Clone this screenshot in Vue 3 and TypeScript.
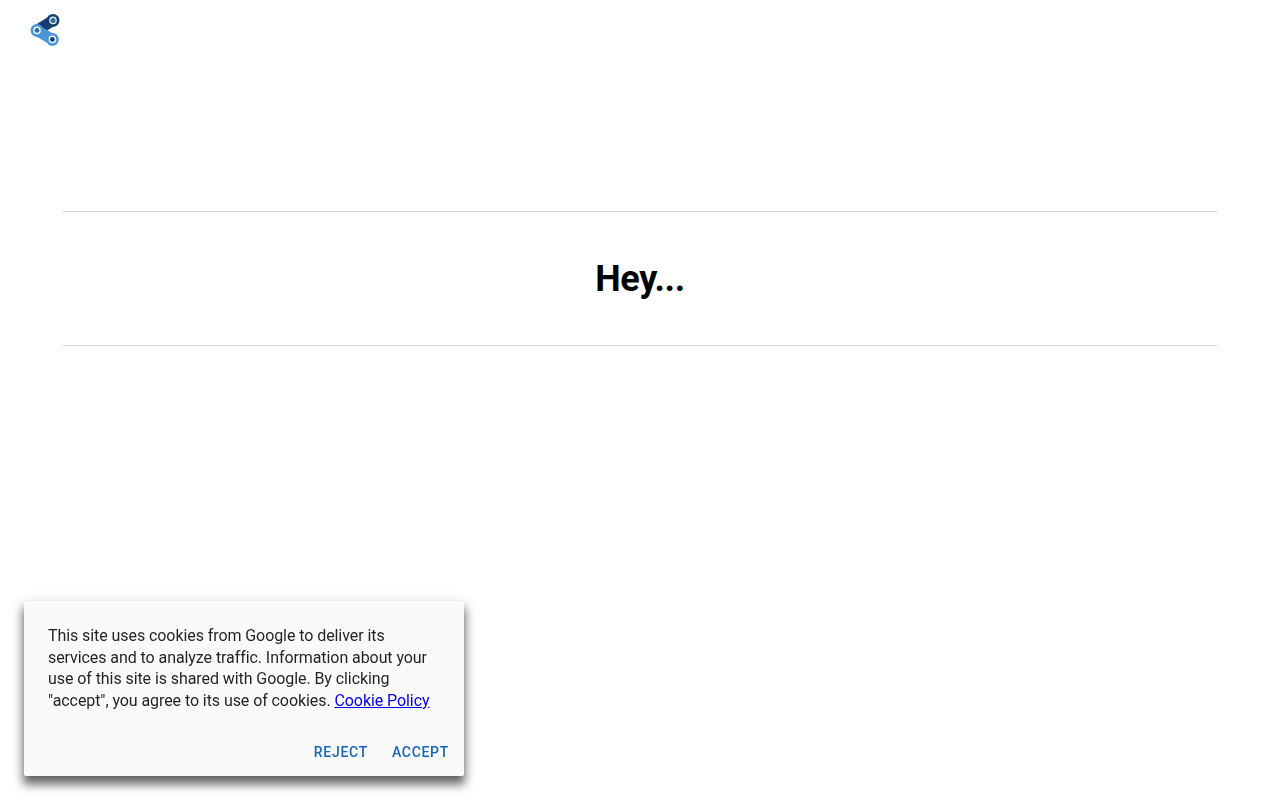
<script setup lang="ts">
const title: string = 'Hey...'
</script>

<template>
  <div class="page">
    <header class="top">
      <svg class="logo" width="32" height="34" viewBox="0 0 32 34" aria-label="logo">
        <path d="M7 16.4 L23 6.4" stroke="#123f6d" stroke-width="11" fill="none" />
        <circle cx="23" cy="6.4" r="6.4" fill="#123f6d" />
        <circle cx="23" cy="6.4" r="3.8" fill="#dfeaf5" />
        <circle cx="23" cy="6.4" r="2.5" fill="#2f6da6" />
        <path d="M7 16.4 L22.4 25.4" stroke="#4a94d8" stroke-width="11" fill="none" />
        <circle cx="7" cy="16.4" r="6.4" fill="#4a94d8" />
        <circle cx="7" cy="16.4" r="3.8" fill="#f2f7fc" />
        <circle cx="7" cy="16.4" r="2.4" fill="#2f6da6" />
        <circle cx="22.4" cy="25.4" r="6.4" fill="#4a94d8" />
        <circle cx="22.4" cy="25.4" r="3.8" fill="#f2f7fc" />
        <circle cx="22.4" cy="25.4" r="2.4" fill="#123f6d" />
      </svg>
    </header>
    <main class="main">
      <div class="band">
        <h1 class="title">{{ title }}</h1>
      </div>
    </main>
    <aside class="card">
      <p class="msg">
        This site uses cookies from Google to deliver its services and to analyze traffic. Information about your use of this site is shared with Google. By clicking "accept", you agree to its use of cookies.
        <a class="link" href="#">Cookie Policy</a>
      </p>
      <div class="actions">
        <button class="btn" type="button">Reject</button>
        <button class="btn" type="button">Accept</button>
      </div>
    </aside>
  </div>
</template>

<style>
html, body { margin: 0; background: #fff; }
</style>

<style scoped>
.page {
  height: 800px;
  overflow: hidden;
  font-family: Roboto, "Liberation Sans", sans-serif;
  box-sizing: border-box;
}
.top {
  height: 211px;
  box-sizing: border-box;
  padding: 14px 0 0 30px;
}
.logo { display: block; }
.main { padding: 0 63px; }
.band {
  border-top: 1px solid #d6d6d6;
  border-bottom: 1px solid #d6d6d6;
  height: 133px;
  display: flex;
  align-items: center;
  justify-content: center;
}
.title {
  margin: 0;
  font-size: 36px;
  line-height: 44px;
  font-weight: 700;
  letter-spacing: -0.3px;
  color: #000;
}
.card {
  position: fixed;
  left: 24px;
  bottom: 24px;
  width: 440px;
  height: 175px;
  box-sizing: border-box;
  padding: 24px 15px 8px 24px;
  background: #fafafa;
  border-radius: 2px;
  box-shadow: 0 8px 10px 1px rgba(0,0,0,.5), 0 3px 14px 2px rgba(0,0,0,.12), 0 5px 5px -3px rgba(0,0,0,.2);
  display: flex;
  flex-direction: column;
  justify-content: space-between;
}
.msg {
  margin: 0;
  padding-right: 9px;
  font-size: 16px;
  line-height: 21.6px;
  letter-spacing: -0.075px;
  color: rgba(0,0,0,.87);
}
.link { color: #0000ee; text-decoration: underline; }
.actions { display: flex; justify-content: flex-end; gap: 24px; height: 32px; align-items: center; }
.btn {
  border: 0;
  background: none;
  padding: 0;
  font: 500 14px/20px Roboto, "Liberation Sans", sans-serif;
  letter-spacing: 0.7px;
  text-transform: uppercase;
  color: #1565c0;
}
</style>
